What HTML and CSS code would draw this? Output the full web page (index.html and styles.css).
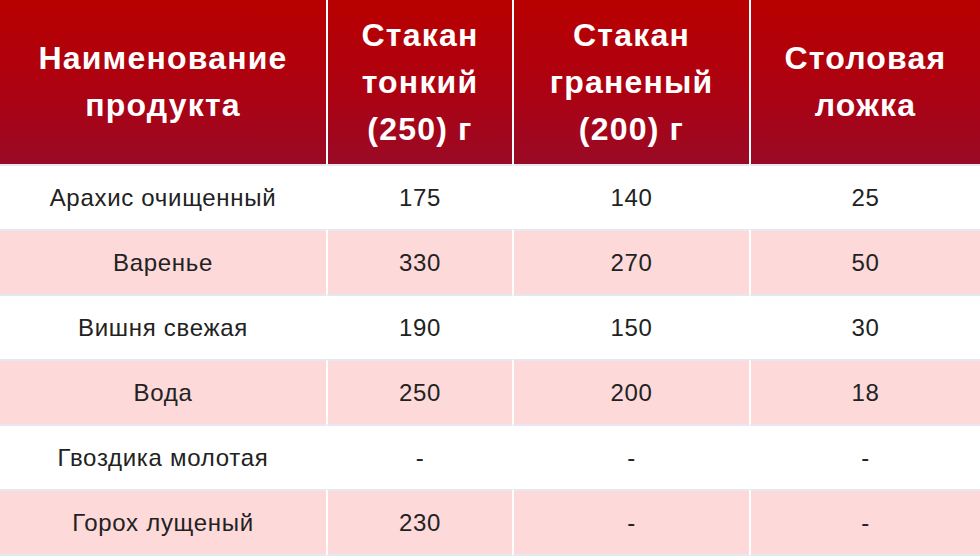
FILE: index.html
```html
<!DOCTYPE html>
<html lang="ru">
<head>
<meta charset="utf-8">
<title>Таблица мер</title>
<link rel="stylesheet" href="styles.css">
</head>
<body>
<table class="measures">
  <colgroup>
    <col class="c1">
    <col class="c2">
    <col class="c3">
    <col class="c4">
  </colgroup>
  <thead>
    <tr>
      <th>Наименование продукта</th>
      <th>Стакан тонкий (250) г</th>
      <th>Стакан граненый (200) г</th>
      <th>Столовая ложка</th>
    </tr>
  </thead>
  <tbody>
    <tr><td>Арахис очищенный</td><td>175</td><td>140</td><td>25</td></tr>
    <tr class="alt"><td>Варенье</td><td>330</td><td>270</td><td>50</td></tr>
    <tr><td>Вишня свежая</td><td>190</td><td>150</td><td>30</td></tr>
    <tr class="alt"><td>Вода</td><td>250</td><td>200</td><td>18</td></tr>
    <tr><td>Гвоздика молотая</td><td>-</td><td>-</td><td>-</td></tr>
    <tr class="alt last"><td>Горох лущеный</td><td>230</td><td>-</td><td>-</td></tr>
  </tbody>
</table>
</body>
</html>
```

FILE: styles.css
```css
html, body {
  margin: 0;
  padding: 0;
  background: #ffffff;
}

.measures {
  width: 980px;
  table-layout: fixed;
  border-collapse: separate;
  border-spacing: 0;
  font-family: "Liberation Sans", Arial, sans-serif;
}

.c1 { width: 326px; }
.c2 { width: 186px; }
.c3 { width: 237px; }
.c4 { width: 231px; }

.measures th,
.measures td {
  box-sizing: border-box;
  text-align: center;
  vertical-align: middle;
  padding: 0 6px;
}

.measures th + th,
.measures td + td {
  border-left: 2px solid #ffffff;
}

.measures th {
  height: 164px;
  background: linear-gradient(to bottom, #b80000 0%, #ad0212 55%, #9a0a25 100%);
  color: #ffffff;
  font-size: 32px;
  font-weight: bold;
  line-height: 47px;
  letter-spacing: 1.2px;
}

.measures td {
  height: 65px;
  border-top: 2px solid #e4e8f1;
  background: #ffffff;
  color: #222222;
  font-size: 24px;
  line-height: 28px;
  letter-spacing: 0.7px;
}

.measures tr.alt td {
  background: #fdd9d9;
}

.measures tr.last td {
  height: 67px;
  border-bottom: 2px solid #e4e8f1;
}
```
